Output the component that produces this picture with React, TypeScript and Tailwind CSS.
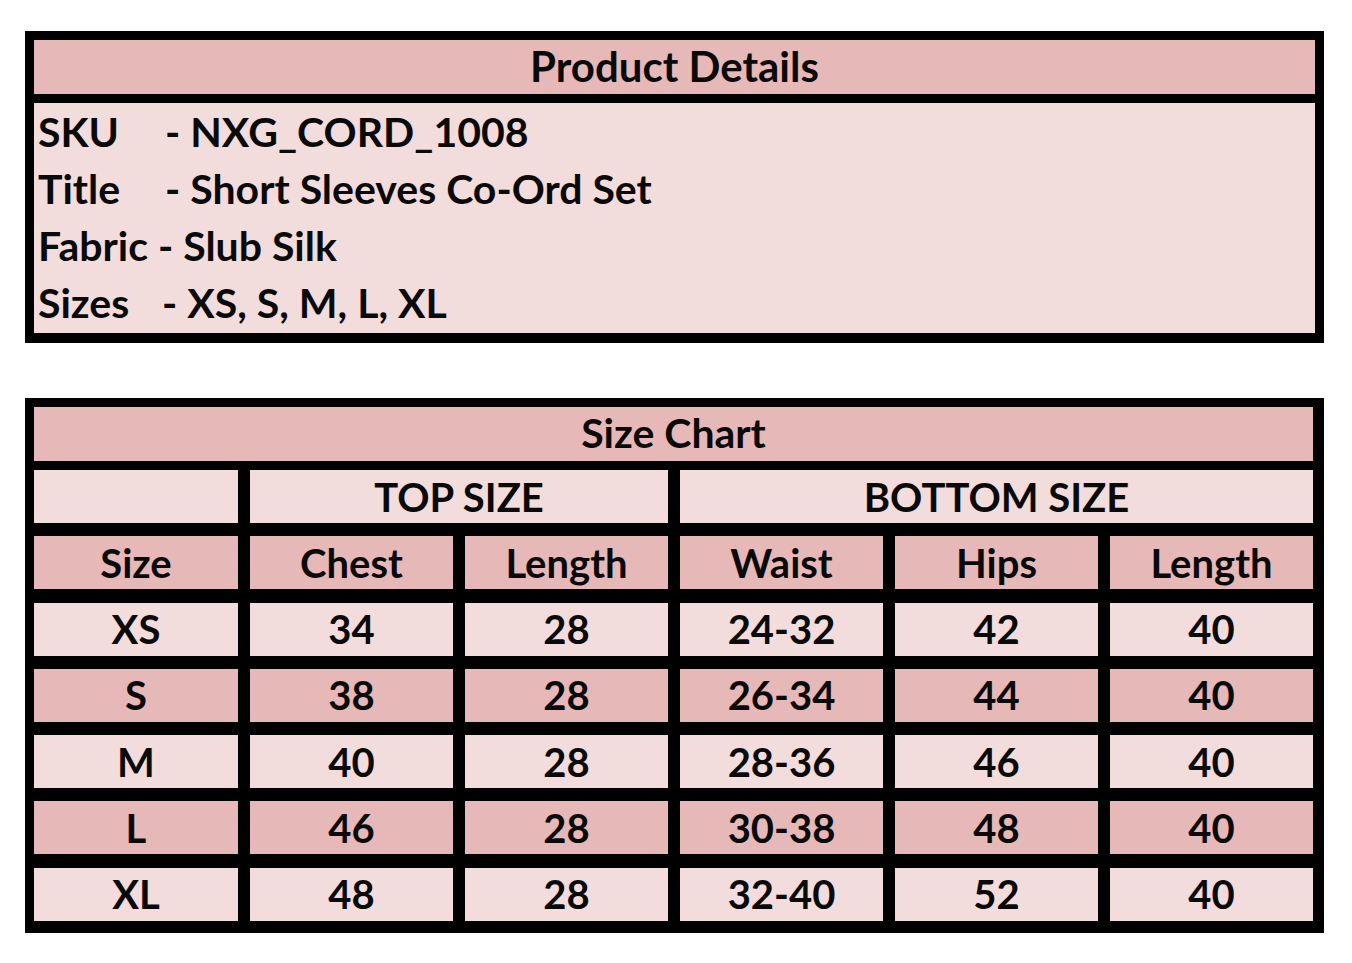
import React from "react";

const font = { fontFamily: "Lato, 'Open Sans', sans-serif" };

const rows = [
  ["XS", "34", "28", "24-32", "42", "40"],
  ["S", "38", "28", "26-34", "44", "40"],
  ["M", "40", "28", "28-36", "46", "40"],
  ["L", "46", "28", "30-38", "48", "40"],
  ["XL", "48", "28", "32-40", "52", "40"],
];

const heads = ["Size", "Chest", "Length", "Waist", "Hips", "Length"];

function Cell({ children, dark }: { children?: React.ReactNode; dark?: boolean }) {
  return (
    <div
      className={`${dark ? "bg-[#e6b8b7]" : "bg-[#f2dcdc]"} h-[53px] flex items-center justify-center text-[40px] font-bold text-[#0a0a0a] leading-none`}
    >
      {children}
    </div>
  );
}

export default function App() {
  return (
    <div className="w-[1352px] h-[963px] bg-white pt-[31px] pl-[25px]" style={font}>
      {/* product details */}
      <div className="w-[1299px] bg-black p-[9px] pb-[10px]">
        <div className="h-[54px] bg-[#e6b8b7] flex items-center justify-center text-[42px] font-bold text-[#0a0a0a] leading-none pb-[3px]">
          Product Details
        </div>
        <div className="mt-[9px] h-[230px] bg-[#f2dcdc] pl-[4px] text-[41px] font-bold text-[#0a0a0a] leading-[57px]">
          <div>
            <span className="inline-block w-[127px]">SKU</span>- NXG_CORD_1008
          </div>
          <div>
            <span className="inline-block w-[127px]">Title</span>- Short Sleeves Co-Ord Set
          </div>
          <div>Fabric - Slub Silk</div>
          <div>
            <span className="inline-block w-[124px]">Sizes</span>- XS, S, M, L, XL
          </div>
        </div>
      </div>

      {/* size chart */}
      <div className="mt-[55px] w-[1299px] bg-black pt-[9px] pb-[12px] pl-[9px] pr-[11px]">
        <div className="h-[54px] bg-[#e6b8b7] flex items-center justify-center text-[41px] font-bold text-[#0a0a0a] leading-none pb-[4px]">
          Size Chart
        </div>
        <div className="mt-[9px] grid grid-cols-[204px_203px_203px_203px_203px_203px] gap-x-[12px] gap-y-[13.3px]">
          <Cell />
          <div className="col-span-2">
            <Cell>TOP SIZE</Cell>
          </div>
          <div className="col-span-3">
            <Cell>BOTTOM SIZE</Cell>
          </div>
          {heads.map((h, i) => (
            <Cell key={"h" + i} dark>
              {h}
            </Cell>
          ))}
          {rows.map((r, ri) =>
            r.map((v, ci) => (
              <Cell key={ri + "-" + ci} dark={ri % 2 === 1}>
                {v}
              </Cell>
            ))
          )}
        </div>
      </div>
    </div>
  );
}
